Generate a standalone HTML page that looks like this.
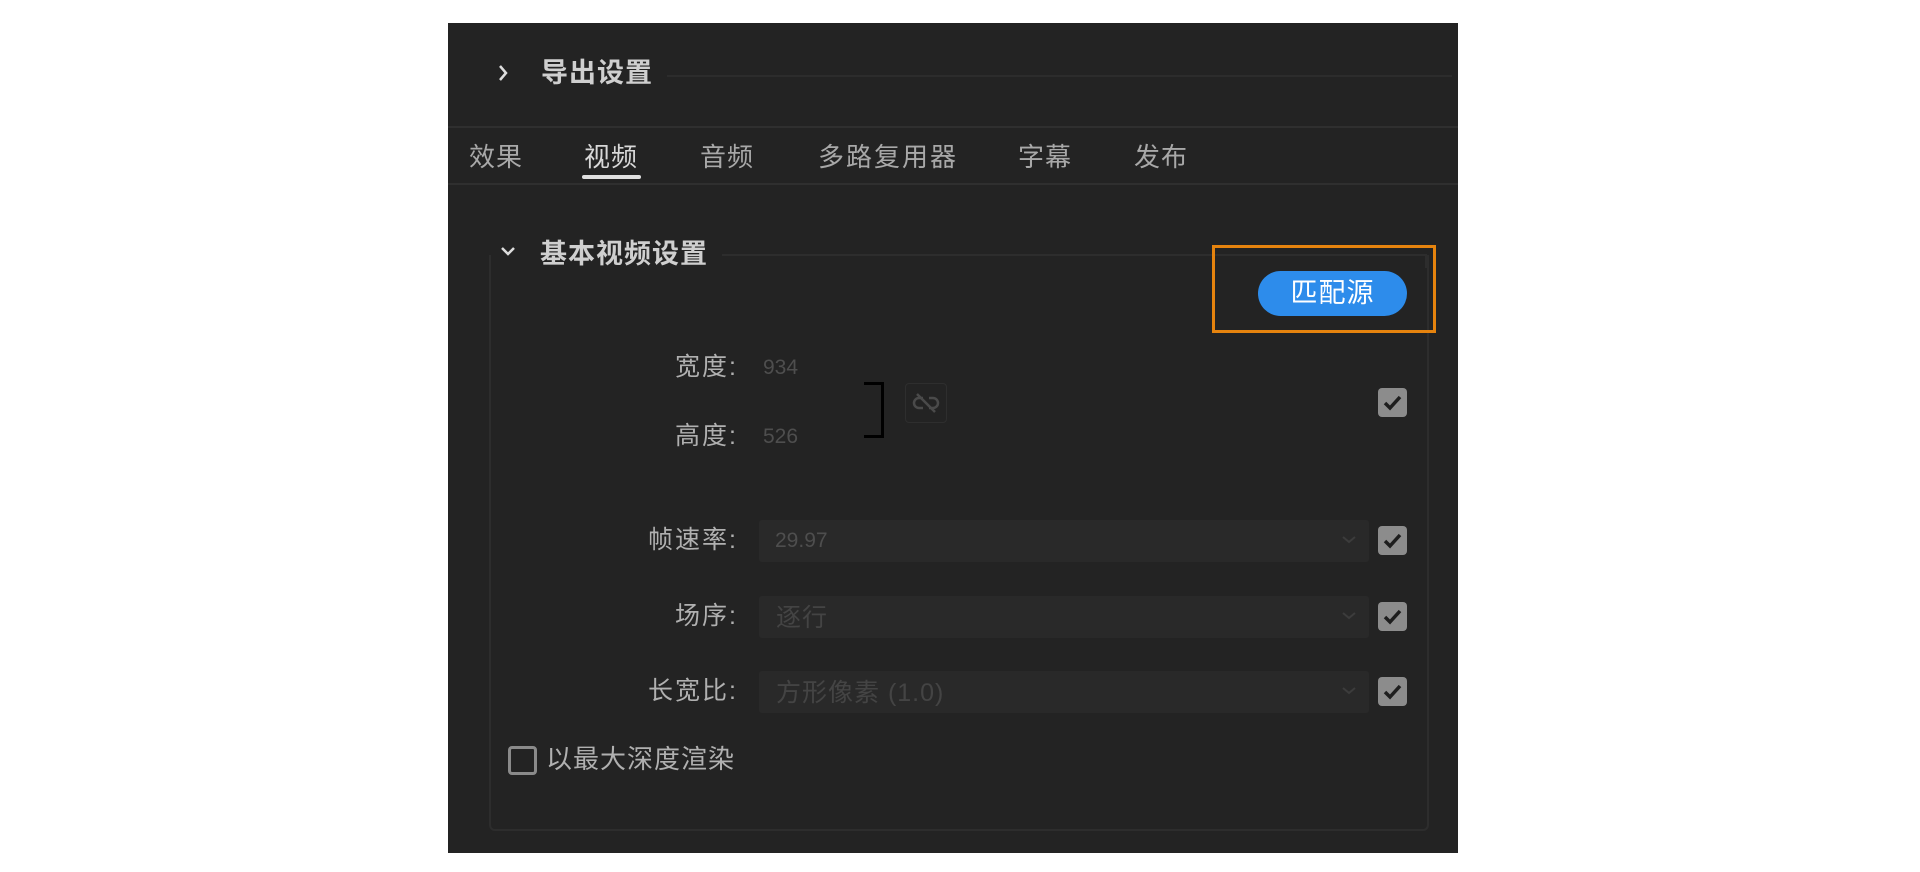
<!DOCTYPE html>
<html><head><meta charset="utf-8"><style>
body{margin:0;width:1920px;height:872px;background:#fff;position:relative;overflow:hidden;font-family:"Liberation Sans","Noto Sans CJK SC",sans-serif;}
.a{position:absolute;}
#p{left:448px;top:23px;width:1010px;height:830px;background:#232323;}
.t{color:#c8c8c8;font-size:26px;line-height:30px;white-space:nowrap;}
.lab{color:#b0b0b0;font-size:25px;line-height:30px;text-align:right;width:200px;left:538px;letter-spacing:2px;}
.val{color:#4e4e4e;font-size:21px;line-height:26px;}
.dd{left:759px;width:610px;height:42px;background:#292929;border-radius:3px;}
.cb{left:1378px;width:29px;height:29px;background:#8c8c8c;border-radius:4px;}
</style></head><body>
<div id="p" class="a"></div>
<svg class="a" style="left:496px;top:62px" width="14" height="22"><path d="M4 4 L10 11 L4 18" stroke="#ddd" stroke-width="2.5" fill="none"/></svg>
<div class="a t" style="left:541px;top:58px;font-size:27px;font-weight:bold;color:#cfcfcf;letter-spacing:1px">导出设置</div>
<div class="a" style="left:667px;top:75px;width:785px;height:2px;background:#2c2c2c"></div>
<div class="a" style="left:448px;top:126px;width:1010px;height:2px;background:#2f2f2f"></div>
<div class="a t" style="left:469px;top:142px;color:#a8a8a8;letter-spacing:1px">效果</div>
<div class="a t" style="left:584px;top:142px;color:#d8d8d8;letter-spacing:1px">视频</div>
<div class="a" style="left:582px;top:175px;width:59px;height:4px;background:#e0e0e0;border-radius:2px"></div>
<div class="a t" style="left:700px;top:142px;color:#a8a8a8;letter-spacing:1px">音频</div>
<div class="a t" style="left:818px;top:142px;color:#a8a8a8;letter-spacing:2px">多路复用器</div>
<div class="a t" style="left:1018px;top:142px;color:#a8a8a8;letter-spacing:1px">字幕</div>
<div class="a t" style="left:1134px;top:142px;color:#a8a8a8;letter-spacing:1px">发布</div>
<div class="a" style="left:448px;top:183px;width:1010px;height:2px;background:#2f2f2f"></div>
<div class="a" style="left:489px;top:255px;width:936px;height:574px;border:2px solid #2d2d2d;border-top:none;border-radius:0 0 6px 6px"></div>
<div class="a" style="left:722px;top:254px;width:705px;height:2px;background:#2d2d2d"></div>
<div class="a" style="left:1425px;top:254px;width:2px;height:14px;background:#2d2d2d"></div>
<svg class="a" style="left:498px;top:243px" width="20" height="16"><path d="M4 5 L10 11 L16 5" stroke="#ddd" stroke-width="2.5" fill="none"/></svg>
<div class="a t" style="left:540px;top:239px;font-size:27px;font-weight:bold;color:#cfcfcf;letter-spacing:1px">基本视频设置</div>
<div class="a" style="left:1212px;top:245px;width:218px;height:82px;border:3px solid #e5830e"></div>
<div class="a" style="left:1258px;top:271px;width:149px;height:45px;background:#2d8ceb;border-radius:23px;color:#fff;font-size:27px;line-height:45px;text-align:center;letter-spacing:1px">匹配源</div>
<div class="a lab" style="top:352px">宽度:</div>
<div class="a val" style="left:763px;top:355px">934</div>
<div class="a lab" style="top:421px">高度:</div>
<div class="a val" style="left:763px;top:424px">526</div>
<div class="a" style="left:864px;top:382px;width:17px;height:50px;border:3px solid #000;border-left:none"></div>
<div class="a" style="left:905px;top:383px;width:40px;height:38px;border:1px solid #2e2e2e;border-radius:4px"></div>
<svg class="a" style="left:905px;top:383px" width="42" height="40"><g stroke="#4a4a4a" stroke-width="2.5" fill="none"><path d="M18 15 h-4 a5 5 0 0 0 0 10 h4"/><path d="M24 15 h4 a5 5 0 0 1 0 10 h-4"/><path d="M12 11 L30 29"/></g></svg>
<div class="a cb" style="top:388px"></div>
<svg class="a" style="left:1378px;top:388px" width="29" height="29"><path d="M7 15 L12 20 L22 9" stroke="#1e1e1e" stroke-width="3.5" fill="none"/></svg>
<div class="a lab" style="top:525px">帧速率:</div>
<div class="a dd" style="top:520px"></div>
<div class="a val" style="left:775px;top:528px">29.97</div>
<svg class="a" style="left:1340px;top:534px" width="18" height="12"><path d="M3 3 L9 8 L15 3" stroke="#3c3c3c" stroke-width="2" fill="none"/></svg>
<div class="a cb" style="top:526px"></div>
<svg class="a" style="left:1378px;top:526px" width="29" height="29"><path d="M7 15 L12 20 L22 9" stroke="#1e1e1e" stroke-width="3.5" fill="none"/></svg>
<div class="a lab" style="top:601px">场序:</div>
<div class="a dd" style="top:596px"></div>
<div class="a val" style="left:776px;top:603px;font-size:25px;line-height:30px;color:#444;letter-spacing:1px">逐行</div>
<svg class="a" style="left:1340px;top:610px" width="18" height="12"><path d="M3 3 L9 8 L15 3" stroke="#3c3c3c" stroke-width="2" fill="none"/></svg>
<div class="a cb" style="top:602px"></div>
<svg class="a" style="left:1378px;top:602px" width="29" height="29"><path d="M7 15 L12 20 L22 9" stroke="#1e1e1e" stroke-width="3.5" fill="none"/></svg>
<div class="a lab" style="top:676px">长宽比:</div>
<div class="a dd" style="top:671px"></div>
<div class="a val" style="left:776px;top:678px;font-size:25px;line-height:30px;color:#444;letter-spacing:1px">方形像素 (1.0)</div>
<svg class="a" style="left:1340px;top:685px" width="18" height="12"><path d="M3 3 L9 8 L15 3" stroke="#3c3c3c" stroke-width="2" fill="none"/></svg>
<div class="a cb" style="top:677px"></div>
<svg class="a" style="left:1378px;top:677px" width="29" height="29"><path d="M7 15 L12 20 L22 9" stroke="#1e1e1e" stroke-width="3.5" fill="none"/></svg>
<div class="a" style="left:508px;top:746px;width:23px;height:23px;border:3px solid #8a8a8a;border-radius:4px"></div>
<div class="a t" style="left:546px;top:744px;color:#b0b0b0;letter-spacing:1px">以最大深度渲染</div>
</body></html>
